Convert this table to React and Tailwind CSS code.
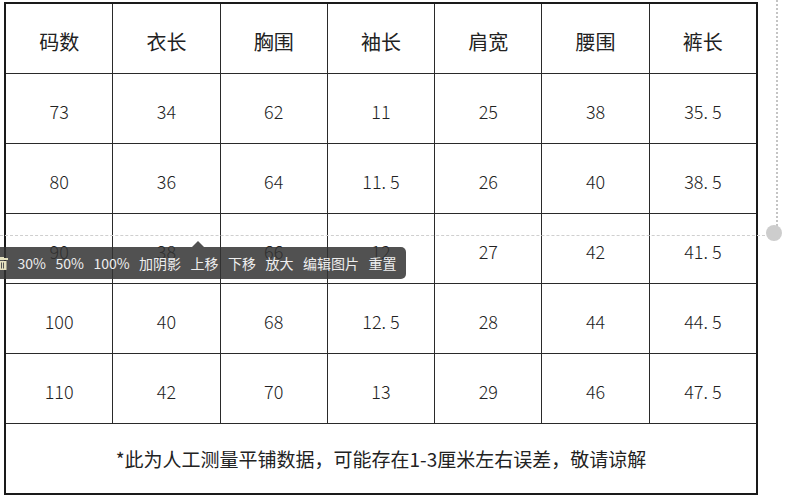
import React from 'react'

const heads = ['码数', '衣长', '胸围', '袖长', '肩宽', '腰围', '裤长']
const rows = [
    ['73', '34', '62', '11', '25', '38', '35.5'],
    ['80', '36', '64', '11.5', '26', '40', '38.5'],
    ['90', '38', '66', '12', '27', '42', '41.5'],
    ['100', '40', '68', '12.5', '28', '44', '44.5'],
    ['110', '42', '70', '13', '29', '46', '47.5'],
]
const tools = ['30%', '50%', '100%', '加阴影', '上移', '下移', '放大', '编辑图片', '重置']

const Num = ({ v }) => {
    const [a, b] = v.split('.')
    if (b === undefined) return <span>{a}</span>
    return (
        <span>
            {a}<span className="mr-[4px]">.</span>{b}
        </span>
    )
}

const App = () => {
    return (
        <div className="relative w-[811px] h-[499px] bg-white overflow-hidden font-['Noto_Sans_CJK_SC',sans-serif] text-[#222]">
            {/* size table */}
            <div className="ml-[4px] mt-[2px] w-[754px] h-[493px] border-2 border-[#1a1a1a] bg-[#2a2a2a] grid grid-cols-7 grid-rows-7 gap-px">
                {heads.map((h) => (
                    <div key={h} className="bg-white flex items-center justify-center pt-[6px] text-[20px]">
                        {h}
                    </div>
                ))}
                {rows.map((r, i) =>
                    r.map((c, j) => (
                        <div key={i + '-' + j} className="bg-white flex items-center justify-center pt-[6px] text-[18px] font-light">
                            <Num v={c} />
                        </div>
                    ))
                )}
                <div className="col-span-7 bg-white flex items-center justify-center pt-[2px] text-[19px]">
                    *此为人工测量平铺数据，可能存在1-3厘米左右误差，敬请谅解
                </div>
            </div>

            {/* image edit guides (overlay) */}
            <div className="absolute left-0 top-[235px] w-[770px] border-t border-dashed border-[#cfcfcf]" />
            <div className="absolute left-[776px] top-0 h-[226px] border-l-2 border-dotted border-[#c4c4c4]" />
            <div className="absolute left-[766px] top-[225px] w-[16px] h-[16px] rounded-full bg-[#cdcdcd]" />

            {/* toolbar (overlay) */}
            <div className="absolute left-[-8px] top-[247px] h-[32px] rounded-[5px] bg-[#333]/85 flex items-center gap-[9.5px] pl-[3px] pr-[9px] text-[14px] text-[#eee]">
                <svg width="13" height="13" viewBox="0 0 13 13" className="shrink-0">
                    <rect x="0" y="1" width="13" height="2" fill="#e6e2c0" />
                    <rect x="4" y="0" width="5" height="1.5" fill="#e6e2c0" />
                    <rect x="1.5" y="4" width="10" height="9" fill="#e6e2c0" />
                    <rect x="4" y="5.5" width="1" height="6" fill="#555" />
                    <rect x="6" y="5.5" width="1" height="6" fill="#555" />
                    <rect x="8" y="5.5" width="1" height="6" fill="#555" />
                </svg>
                {tools.map((t) => (
                    <span key={t}>{t}</span>
                ))}
                <div className="absolute left-[200px] top-[-6px] w-0 h-0 border-x-[6px] border-x-transparent border-b-[6px] border-b-[#333]/85" />
            </div>
        </div>
    )
}

export default App
